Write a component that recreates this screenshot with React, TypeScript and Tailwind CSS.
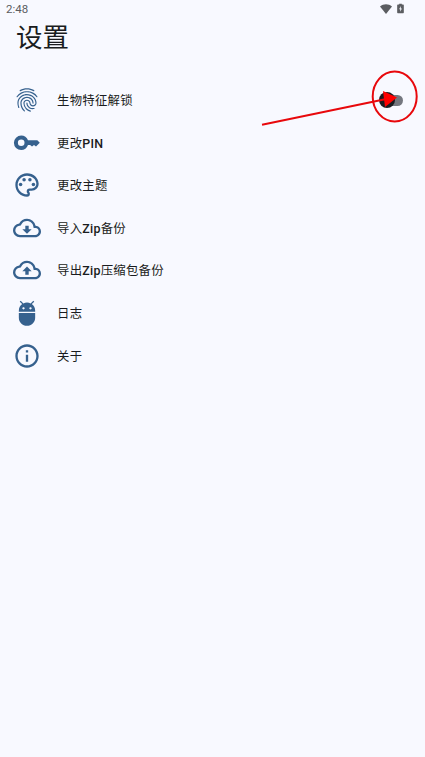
import type { ComponentType } from 'react'
import {
  MdAdb,
  MdFingerprint,
  MdInfoOutline,
  MdOutlineBackup,
  MdOutlineCloudDownload,
  MdOutlineColorLens,
} from 'react-icons/md'

type Setting = {
  icon: ComponentType<{ className?: string }>
  label: string
  toggle?: boolean
}

const SETTINGS: Setting[] = [
  { icon: MdFingerprint,          label: '生物特征解锁', toggle: true },
  { icon: KeyIcon,                label: '更改PIN' },
  { icon: MdOutlineColorLens,     label: '更改主题' },
  { icon: MdOutlineCloudDownload, label: '导入Zip备份' },
  { icon: MdOutlineBackup,        label: '导出Zip压缩包备份' },
  { icon: MdAdb,                  label: '日志' },
  { icon: MdInfoOutline,          label: '关于' },
]

export default function App() {
  return (
    <div className="relative min-h-screen overflow-hidden bg-[#f8f9ff] font-['Roboto','Noto_Sans_CJK_SC',sans-serif] text-[#1a1c20]">
      <StatusBar />
      <h1 className="pl-4 text-[26.5px] leading-[38px]">设置</h1>

      <ul className="mt-[21.7px]">
        {SETTINGS.map((s) => (
          <SettingRow key={s.label} {...s} />
        ))}
      </ul>

      <Pointer />
    </div>
  )
}

function StatusBar() {
  return (
    <div className="flex h-[19px] items-center justify-between pl-[6px] pr-[21px] text-[#5b5d61]">
      <span className="pt-px text-[11.5px] leading-none">2:48</span>
      <div className="flex items-center gap-[5px] pb-[2px]">
        <svg width="12" height="10" viewBox="0 0 12 10" fill="currentColor">
          <path d="M0 2.5C3.5-.5 8.5-.5 12 2.5L6 10z" />
        </svg>
        <svg width="7" height="11" viewBox="0 0 8 11">
          <path d="M2.5 0h3v1H7c.5 0 .8.3.8.8v8.4c0 .5-.3.8-.8.8H1c-.5 0-.8-.3-.8-.8V1.8C.2 1.3.5 1 1 1h1.5z" fill="currentColor" />
          <path d="M4.3 2.5 2.5 6.3h1.2v3L5.6 5.5H4.3z" fill="#f8f9ff" />
        </svg>
      </div>
    </div>
  )
}

function SettingRow({ icon: Icon, label, toggle = false }: Setting) {
  return (
    <li className="flex h-[42.6px] items-center pl-[13px] pr-[22px]">
      <Icon className="size-[28px] shrink-0 text-[#36618e]" />
      <span className="ml-4 flex-1 pt-[2px] text-[12.4px] leading-5 tracking-[0.25px]">
        {/* Latin runs are medium, Chinese stays regular */}
        {label.split(/([A-Za-z]+)/).map((part, idx) => (
          <span key={idx} className={idx % 2 ? 'font-medium' : ''}>{part}</span>
        ))}
      </span>
      {toggle && (
        <button role="switch" aria-checked={false} aria-label={label} className="flex w-6 items-center pt-px">
          <span className="z-10 size-4 shrink-0 rounded-full bg-[#1a1c20]" />
          <span className="-ml-2 h-[11px] w-4 rounded-r-full bg-[#74777f]" />
        </button>
      )}
    </li>
  )
}

function KeyIcon({ className }: { className?: string }) {
  return (
    <svg className={className} viewBox="0 0 28 28" fill="currentColor">
      <path
        fillRule="evenodd"
        d="M8.2 6.5c3.2 0 5.7 1.8 6.8 4.8h9.3l2.5 2.5-3.8 3.8-2-1.5-2 1.5-1.9-1.5H15c-1 3-3.6 5-6.8 5A7.3 7.3 0 0 1 .9 13.8 7.3 7.3 0 0 1 8.2 6.5zm0 4a3.3 3.3 0 1 0 0 6.6 3.3 3.3 0 0 0 0-6.6z"
      />
    </svg>
  )
}

// Red callout around the biometric switch
function Pointer() {
  return (
    <svg className="pointer-events-none absolute left-[255px] top-[65px] z-20" width="170" height="65" viewBox="0 0 170 65">
      <ellipse cx="139.7" cy="31.5" rx="22" ry="25" fill="none" stroke="#e8080c" strokeWidth="2" />
      <path d="M7 59.7 130 34.3" stroke="#e8080c" strokeWidth="2" />
      <path d="M128 26 142 32.5 130 42z" fill="#ff0000" />
    </svg>
  )
}
